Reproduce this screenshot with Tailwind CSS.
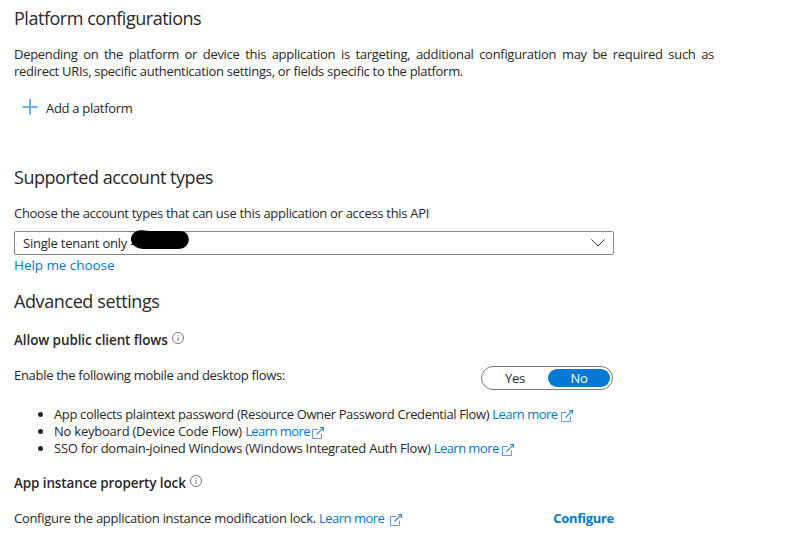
<!DOCTYPE html>
<html lang="en">
<head>
  <meta charset="UTF-8" />
  <title>Authentication</title>
  <meta name="viewport" content="width=device-width, initial-scale=1" />
  <script src="https://cdn.jsdelivr.net/npm/@tailwindcss/browser@4"></script>
</head>
<body class="bg-white h-[545px] overflow-hidden text-[#292827] text-[13px] leading-[17px] tracking-[-0.3px] font-['Segoe_UI','Open_Sans',sans-serif]">

  <svg class="hidden">
    <symbol id="external" viewBox="0 0 14 14" fill="none" stroke="currentColor">
      <path d="M7 3.5H1.5v9h9V7.5" stroke-opacity=".8" />
      <path d="M5.5 8.5L13 1M9 1.5h3.5V5" stroke-width="1.2" />
    </symbol>
    <symbol id="info" viewBox="0 0 12 12" fill="none" stroke="currentColor">
      <circle cx="6" cy="6" r="5.5" />
      <path d="M6 5v4M6 3v1" />
    </symbol>
  </svg>

  <main class="pl-3.5 pt-[7px]">
    <!-- Platform configurations -->
    <section class="h-[159px]">
      <h1 class="text-[18px] leading-[22px] tracking-[-0.47px]">Platform configurations</h1>
      <p class="mt-[17px] w-[700px] text-justify">Depending on the platform or device this application is targeting, additional configuration may be required such as redirect URIs, specific authentication settings, or fields specific to the platform.</p>
      <button class="mt-[19px] ml-2 flex items-start gap-2">
        <svg class="size-4 text-[#6bb0ea]" viewBox="0 0 16 16" fill="none" stroke="currentColor" stroke-width="2"><path d="M8 0v15.5M.5 8h15" /></svg>
        <span class="mt-[1px]">Add a platform</span>
      </button>
    </section>

    <!-- Supported account types -->
    <section class="h-[124px] w-[600px]">
      <h2 class="text-[18px] leading-[22px] tracking-[-0.47px]">Supported account types</h2>
      <p class="mt-[17px]">Choose the account types that can use this application or access this API</p>
      <div class="relative mt-[9px] flex h-6 items-center justify-between rounded-xs border border-[#858585] pr-2 pl-2">
        <span class="tracking-[-0.22px]">Single tenant only -</span>
        <svg class="absolute left-[115px] top-[-2px] h-[20px] w-[59px]" viewBox="0 0 59 20"><path d="M9 .5C12 0 14 1 20 1h30C62 1 62 19 48 19H22C12 19 10 19 6 17-2 13 0 2 9 .5Z" /></svg>
        <svg class="h-2 w-3.5" viewBox="0 0 14 8" fill="none" stroke="#333"><path d="M.5 .5L7 7 13.5 .5" /></svg>
      </div>
      <a class="mt-0.5 block text-[13.5px] tracking-[-0.06px] text-[#0078d4]">Help me choose</a>
    </section>

    <!-- Advanced settings -->
    <section class="w-[600px]">
      <h2 class="text-[18px] leading-[22px] tracking-[-0.4px]">Advanced settings</h2>
      <h3 class="mt-5 flex gap-1 text-[13.5px] font-semibold tracking-[-0.1px]">Allow public client flows<svg class="size-3 text-[#777]"><use href="#info" /></svg></h3>
      <div class="mt-[17px] flex h-6 items-start justify-between">
        <p class="mt-[1px]">Enable the following mobile and desktop flows:</p>
        <div class="mr-[1px] flex h-6 w-[132px] items-center rounded-full border border-[#777] text-center">
          <span class="w-[66px]">Yes</span>
          <span class="h-[18px] w-[62px] rounded-full bg-[#0078d4] leading-[19px] text-white">No</span>
        </div>
      </div>
      <ul class="mt-4 list-disc pl-10">
        <li class="tracking-[-0.36px]">App collects plaintext password (Resource Owner Password Credential Flow) <a class="tracking-[-0.5px] text-[#0078d4]">Learn more<svg class="ml-0.5 inline size-3.5 align-[-4px] text-[#3f83db]"><use href="#external" /></svg></a></li>
        <li class="tracking-[-0.23px]">No keyboard (Device Code Flow) <a class="tracking-[-0.57px] text-[#0078d4]">Learn more<svg class="ml-px inline size-3.5 align-[-4px] text-[#3f83db]"><use href="#external" /></svg></a></li>
        <li class="tracking-[-0.25px]">SSO for domain-joined Windows (Windows Integrated Auth Flow) <a class="tracking-[-0.55px] text-[#0078d4]">Learn more<svg class="ml-0.5 inline size-3.5 align-[-4px] text-[#3f83db]"><use href="#external" /></svg></a></li>
      </ul>
      <h3 class="mt-[18px] flex gap-1 text-[13.5px] font-semibold tracking-[-0.12px]">App instance property lock<svg class="size-3 text-[#777]"><use href="#info" /></svg></h3>
      <div class="mt-[18px] flex justify-between">
        <p class="tracking-[-0.29px]">Configure the application instance modification lock. <a class="tracking-[-0.5px] text-[#0078d4]">Learn more <svg class="ml-0.5 inline size-3.5 align-[-4px] text-[#3f83db]"><use href="#external" /></svg></a></p>
        <a class="font-bold text-[#0078d4]">Configure</a>
      </div>
    </section>
  </main>

</body>
</html>
